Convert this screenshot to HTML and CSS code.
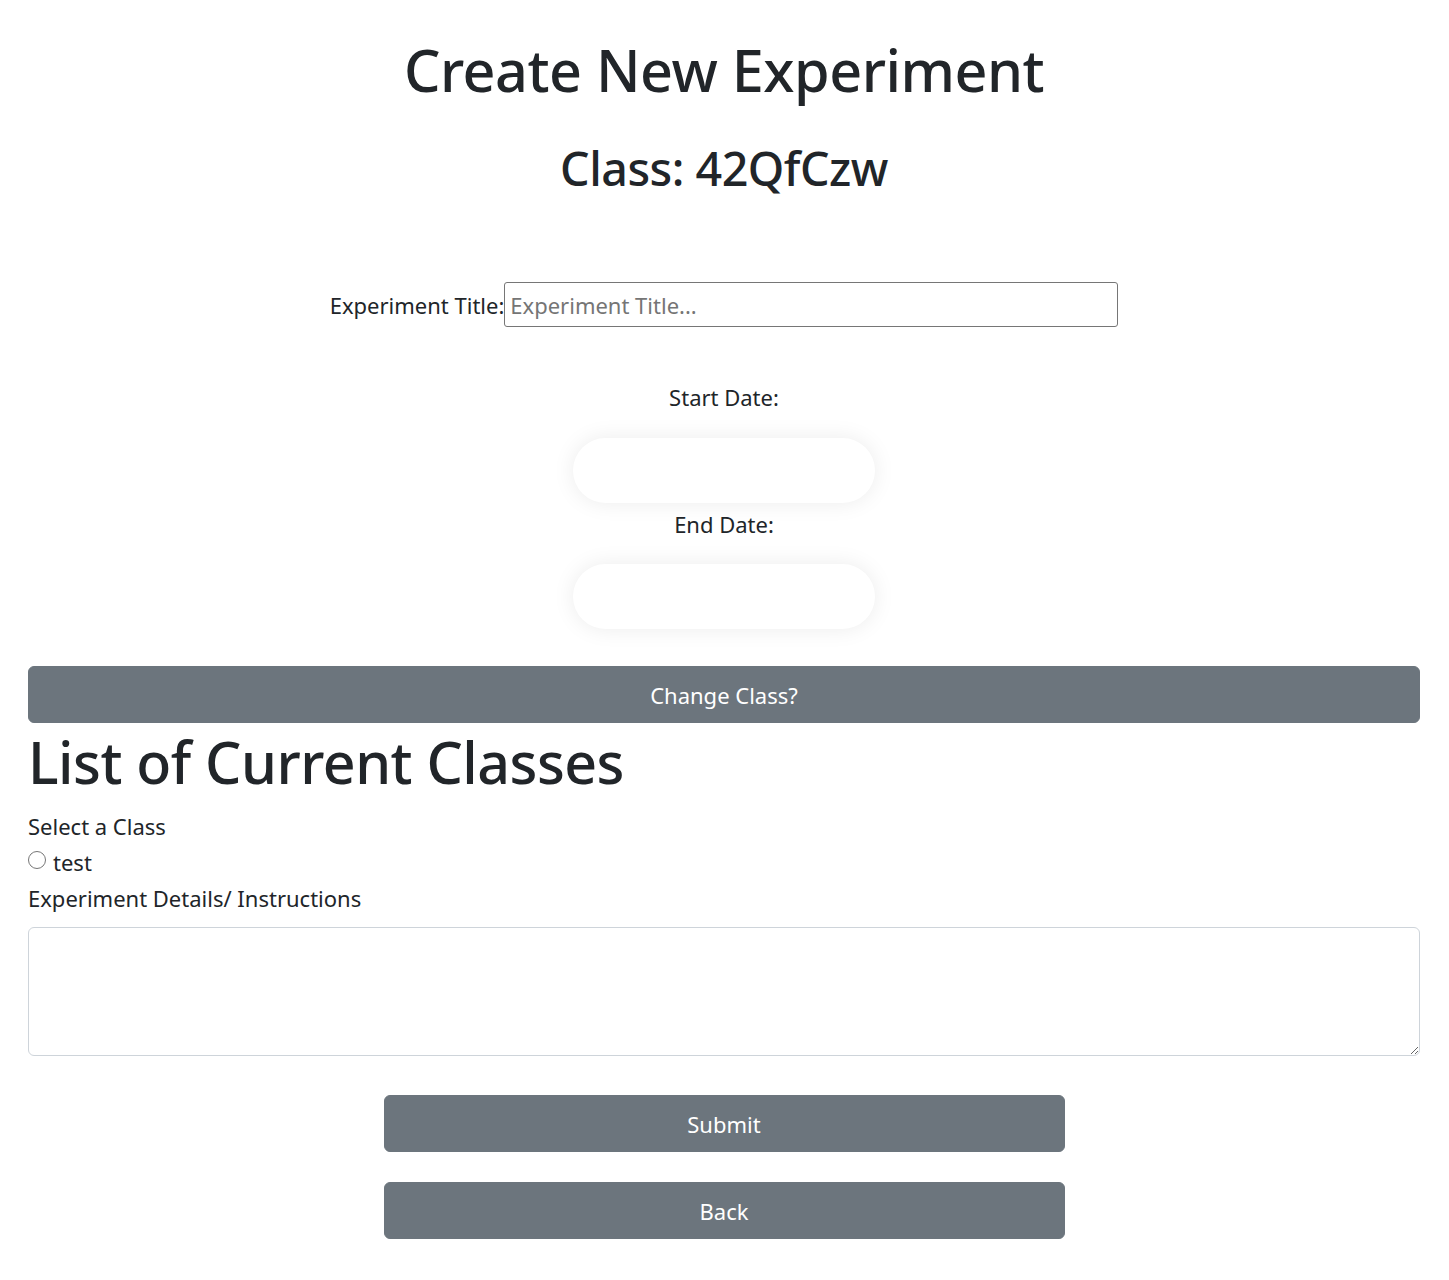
FILE: index.html
```html
<!DOCTYPE html>
<html>
<head>
<meta charset="utf-8">
<link rel="stylesheet" href="styles.css">
</head>
<body>
<div class="page">
  <h1 class="title">Create New Experiment</h1>
  <h2 class="subtitle">Class: 42QfCzw</h2>
  <div class="title-row">
    <label class="label" for="t">Experiment Title:</label>
    <input id="t" class="title-input" type="text" placeholder="Experiment Title...">
  </div>
  <div class="date-block">
    <div class="date-label first">Start Date:</div>
    <input class="date-input" type="text">
    <div class="date-label">End Date:</div>
    <input class="date-input" type="text">
  </div>
  <button class="btn wide">Change Class?</button>
  <h1 class="list-title">List of Current Classes</h1>
  <div class="line">Select a Class</div>
  <label class="line radio-line"><input type="radio" class="radio" name="c"> test</label>
  <div class="line">Experiment Details/ Instructions</div>
  <textarea class="details"></textarea>
  <div class="actions">
    <button class="btn action">Submit</button>
    <button class="btn action">Back</button>
  </div>
</div>
</body>
</html>
```

FILE: styles.css
```css
* { box-sizing: border-box; }
html, body { margin: 0; padding: 0; background: #fff; }
body {
  font-family: "Noto Sans", "Open Sans", sans-serif;
  color: #212529;
  font-size: 24px;
  line-height: 36px;
}
.page {
  padding: 0 29px 40px 28px;
  display: flex;
  flex-direction: column;
}
.title {
  margin: 34px 0 0;
  font-size: 57.5px;
  line-height: 72px;
  font-weight: 500;
  text-align: center;
  letter-spacing: -0.5px;
}
.subtitle {
  margin: 33px 0 0;
  font-size: 46.6px;
  line-height: 58px;
  font-weight: 500;
  text-align: center;
  letter-spacing: -0.5px;
}
.title-row {
  margin-top: 85px;
  display: flex;
  justify-content: center;
  align-items: center;
}
.label { font-size: 22px; }
.title-input {
  width: 614px;
  height: 45px;
  border: 1px solid #767676;
  border-radius: 3px;
  font-family: inherit;
  font-size: 22px;
  padding: 0 5px;
  color: #212529;
}
.title-input::placeholder { color: #757575; }
.date-block {
  display: flex;
  flex-direction: column;
  align-items: center;
  margin-top: 52px;
}
.date-label { font-size: 22px; line-height: 36px; margin-top: 3px; }
.date-label.first { margin-top: 0; }
.date-input {
  margin-top: 22px;
  width: 302px;
  height: 65px;
  border: none;
  border-radius: 33px;
  background: #fff;
  box-shadow: 0 0 22px rgba(0, 0, 0, 0.08);
  outline: none;
}
.date-label.first + .date-input { margin-top: 23px; }
.btn {
  background: #6c757d;
  color: #fff;
  border: 1px solid #6c757d;
  border-radius: 6px;
  font-family: inherit;
  font-size: 22px;
  height: 57px;
  cursor: pointer;
}
.wide { width: 100%; margin-top: 37px; }
.list-title {
  margin: 3px 0 0;
  font-size: 57.3px;
  line-height: 72px;
  font-weight: 500;
  letter-spacing: -0.5px;
}
.line { font-size: 22px; line-height: 36px; }
.list-title + .line { margin-top: 10px; }
.radio-line { display: flex; align-items: center; gap: 7px; }
.radio {
  appearance: none;
  -webkit-appearance: none;
  width: 18px;
  height: 18px;
  margin: 0;
  border: 1.5px solid #767676;
  border-radius: 50%;
  background: #fff;
  position: relative;
  top: -2px;
}
.details {
  margin-top: 11px;
  width: 100%;
  height: 129px;
  border: 1px solid #ced4da;
  border-radius: 6px;
  font-family: inherit;
  font-size: 22px;
}
.actions {
  display: flex;
  flex-direction: column;
  align-items: center;
  gap: 30px;
  margin-top: 39px;
}
.action { width: 681px; }
```
